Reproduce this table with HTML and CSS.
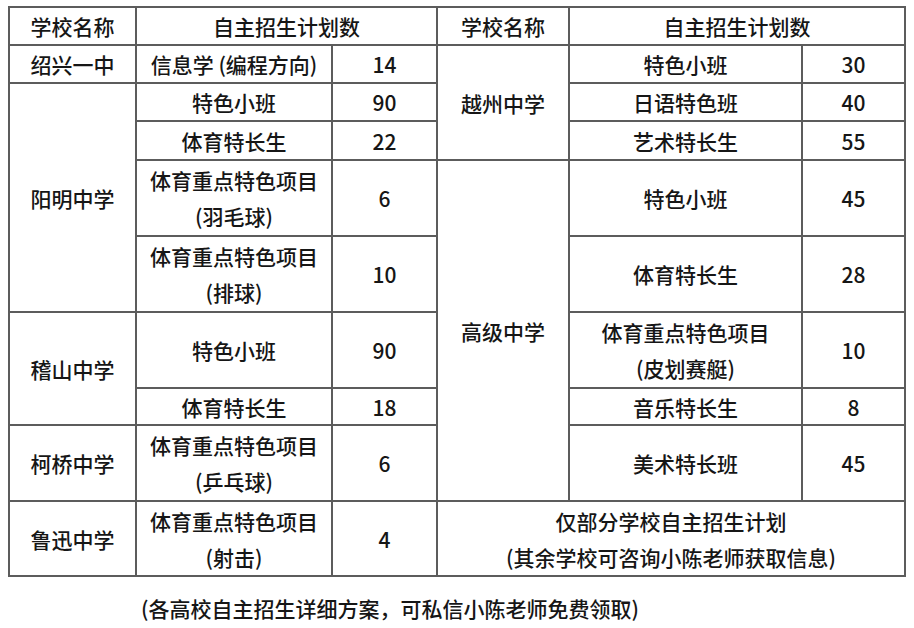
FILE: index.html
```html
<!DOCTYPE html>
<html lang="zh-CN">
<head>
<meta charset="utf-8">
<title>自主招生计划</title>
<link rel="stylesheet" href="styles.css">
</head>
<body>
<div class="page">
<table class="plan">
  <colgroup>
    <col class="c1"><col class="c2"><col class="c3"><col class="c4"><col class="c5"><col class="c6">
  </colgroup>
  <tbody>
    <tr class="h38">
      <td>学校名称</td><td colspan="2">自主招生计划数</td>
      <td>学校名称</td><td colspan="2">自主招生计划数</td>
    </tr>
    <tr class="h38">
      <td>绍兴一中</td><td>信息学 (编程方向)</td><td>14</td>
      <td rowspan="3">越州中学</td><td>特色小班</td><td>30</td>
    </tr>
    <tr class="h38">
      <td rowspan="4">阳明中学</td><td>特色小班</td><td>90</td>
      <td>日语特色班</td><td>40</td>
    </tr>
    <tr class="h39">
      <td>体育特长生</td><td>22</td>
      <td>艺术特长生</td><td>55</td>
    </tr>
    <tr class="h76">
      <td class="two">体育重点特色项目<br>(羽毛球)</td><td>6</td>
      <td rowspan="5">高级中学</td><td>特色小班</td><td>45</td>
    </tr>
    <tr class="h76">
      <td class="two">体育重点特色项目<br>(排球)</td><td>10</td>
      <td>体育特长生</td><td>28</td>
    </tr>
    <tr class="h76">
      <td rowspan="2">稽山中学</td><td>特色小班</td><td>90</td>
      <td class="two">体育重点特色项目<br>(皮划赛艇)</td><td>10</td>
    </tr>
    <tr class="h37">
      <td>体育特长生</td><td>18</td>
      <td>音乐特长生</td><td>8</td>
    </tr>
    <tr class="h76">
      <td>柯桥中学</td><td class="two">体育重点特色项目<br>(乒乓球)</td><td>6</td>
      <td>美术特长班</td><td>45</td>
    </tr>
    <tr class="h75">
      <td>鲁迅中学</td><td class="two">体育重点特色项目<br>(射击)</td><td>4</td>
      <td colspan="3" class="two">仅部分学校自主招生计划<br>(其余学校可咨询小陈老师获取信息)</td>
    </tr>
  </tbody>
</table>
<p class="note">(各高校自主招生详细方案，可私信小陈老师免费领取)</p>
</div>
</body>
</html>
```

FILE: styles.css
```css
html, body {
  margin: 0;
  padding: 0;
  background: #ffffff;
}
body {
  font-family: "Noto Sans CJK SC", "Noto Sans", sans-serif;
  color: #161616;
  font-size: 21px;
  font-weight: 500;
}
.page {
  padding: 6px 0 0 8px;
}
.plan {
  border-collapse: collapse;
  table-layout: fixed;
  width: 898px;
}
.c1 { width: 127px; }
.c2 { width: 196px; }
.c3 { width: 105px; }
.c4 { width: 132px; }
.c5 { width: 233px; }
.c6 { width: 103px; }
.plan td {
  border: 2px solid #5c5c5c;
  padding: 0;
  text-align: center;
  vertical-align: middle;
  line-height: 34px;
  white-space: nowrap;
}
.plan td.two {
  line-height: 36px;
}
.h37 { height: 37px; }
.h38 { height: 38px; }
.h39 { height: 39px; }
.h75 { height: 75px; }
.h76 { height: 76px; }
.note {
  margin: 16px 0 0 133px;
  line-height: 30px;
}
```
